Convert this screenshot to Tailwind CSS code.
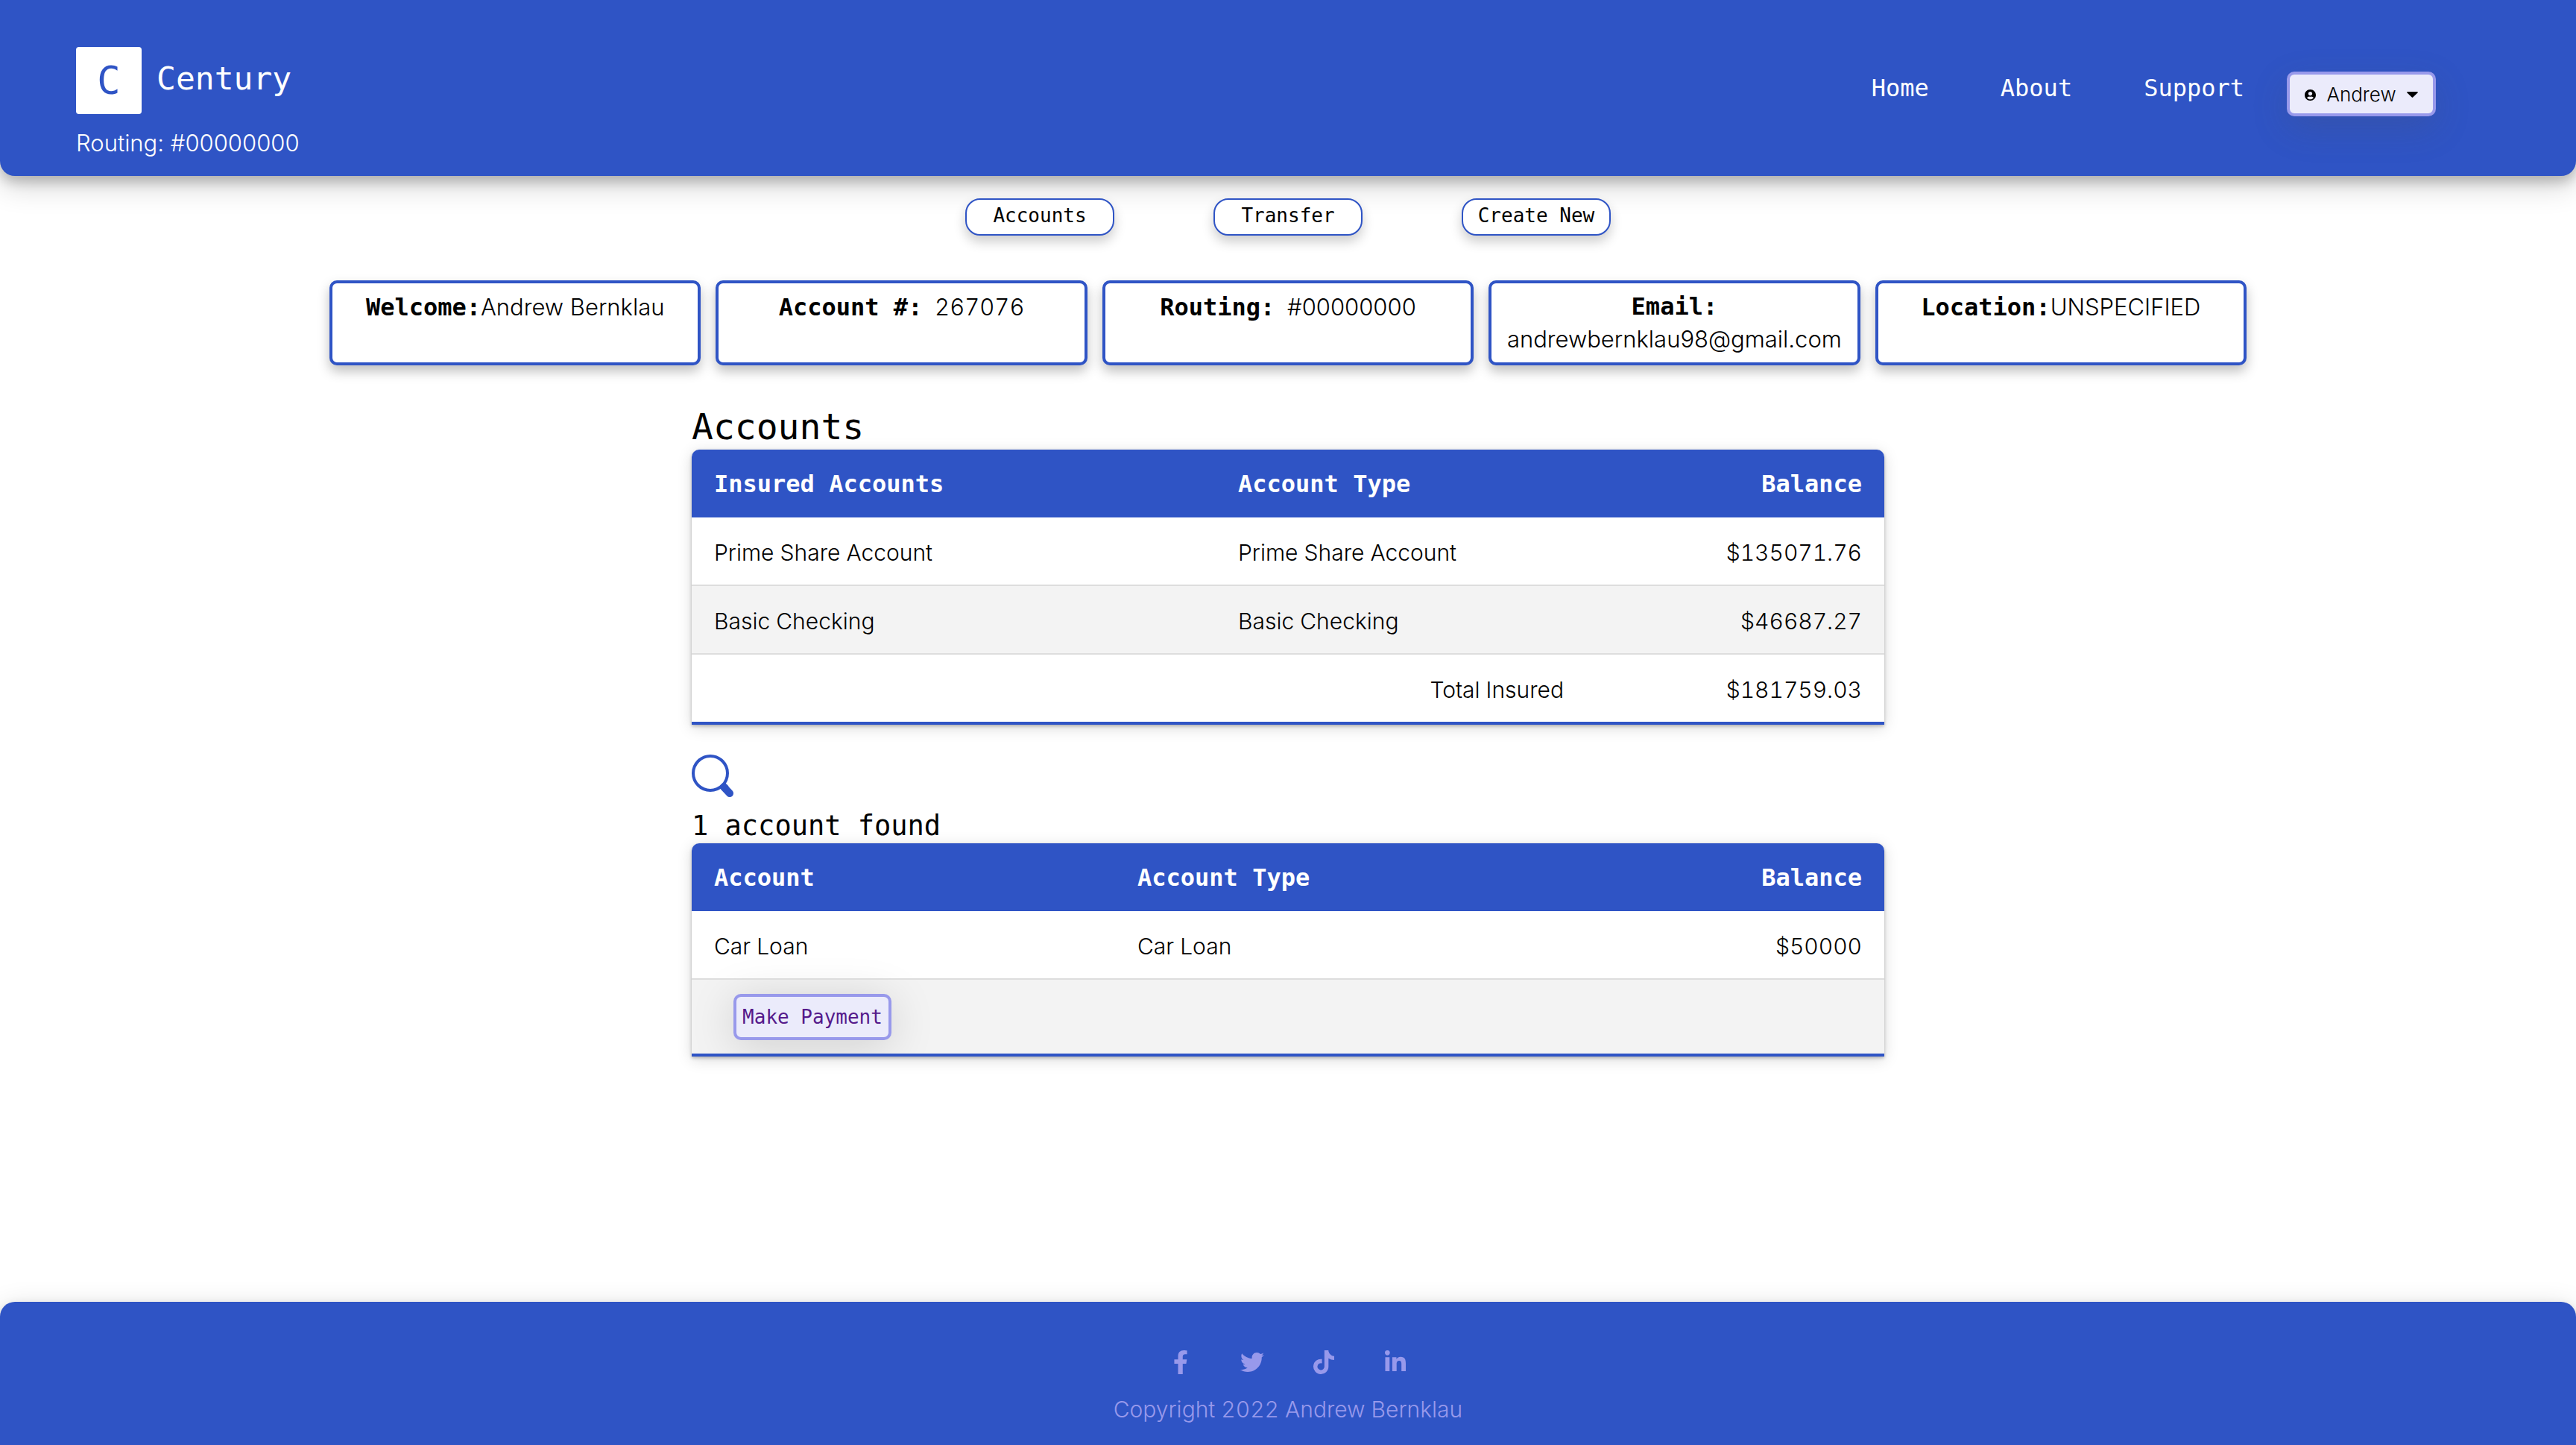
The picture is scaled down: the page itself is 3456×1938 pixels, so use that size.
<!DOCTYPE html>
<html lang="en">
<head>
<meta charset="utf-8">
<meta name="viewport" content="width=device-width, initial-scale=1">
<title>Century</title>
<script src="https://cdn.jsdelivr.net/npm/@tailwindcss/browser@4"></script>
</head>
<body class="flex min-h-screen flex-col bg-white font-['Inter',sans-serif] text-[31px] leading-[42px] font-light text-black">

<header class="flex items-start justify-between rounded-b-[20px] bg-[#2f54c5] pt-[63px] pr-[188px] pb-3 pl-[102px] text-white shadow-[0_8px_16px_rgba(0,0,0,0.2),0_12px_40px_rgba(0,0,0,0.19)]">
  <div>
    <a href="#" class="flex gap-5 font-['DejaVu_Sans_Mono',monospace] font-normal">
      <span class="flex h-[90px] w-[88px] items-center justify-center rounded-sm bg-white text-[52px] text-[#2f54c5]">C</span>
      <span class="pt-[21px] text-[43px]">Century</span>
    </a>
    <p class="mt-[18px] h-[53px]">Routing: #00000000</p>
  </div>
  <div class="flex items-start">
    <nav class="flex gap-24 pt-[34px] pr-[57px] font-['DejaVu_Sans_Mono',monospace] text-[32px] font-normal">
      <a href="#">Home</a>
      <a href="#">About</a>
      <a href="#">Support</a>
    </nav>
    <button type="button" aria-haspopup="menu" class="mt-[33px] flex h-15 w-[200px] items-center justify-between rounded-[10px] border-4 border-[#9899eb] bg-[#ebebfb] px-5 pt-0.5 text-[26px] text-black shadow-[0_16px_48px_rgba(80,80,80,0.2)]">
      <svg class="size-[15px]" viewBox="0 0 496 496" fill="currentColor" aria-hidden="true"><path d="M248 0C111 0 0 111 0 248s111 248 248 248 248-111 248-248S385 0 248 0zm0 96c49 0 88 39 88 88s-39 88-88 88-88-39-88-88 39-88 88-88zm0 344c-59 0-111-27-146-69 19-35 56-59 98-59 3 0 5 0 7 1 13 4 27 7 41 7s28-3 41-7c2-1 4-1 7-1 42 0 79 24 98 59-35 42-87 69-146 69z"/></svg>
      <span>Andrew</span>
      <svg class="h-2 w-[15px]" viewBox="0 0 15 8" fill="currentColor" aria-hidden="true"><path d="M1 0h13c1 0 1 1 .5 1.500L8.200 7.500c-.4.400-1 .4-1.400 0L.5 1.500C0 1 0 0 1 0z"/></svg>
    </button>
  </div>
</header>

<main class="flex flex-1 flex-col items-center">
  <div class="flex gap-[133px] pt-[30px] font-['DejaVu_Sans_Mono',monospace] text-[26px] font-normal">
    <button type="button" class="h-[50px] w-[200px] rounded-[20px] border-2 border-[#2f54c5] bg-white pb-1 leading-[42px] shadow-[0_8px_16px_rgba(0,0,0,0.2)]">Accounts</button>
    <button type="button" class="h-[50px] w-[200px] rounded-[20px] border-2 border-[#2f54c5] bg-white pb-1 leading-[42px] shadow-[0_8px_16px_rgba(0,0,0,0.2)]">Transfer</button>
    <button type="button" class="h-[50px] w-[200px] rounded-[20px] border-2 border-[#2f54c5] bg-white pb-1 leading-[42px] shadow-[0_8px_16px_rgba(0,0,0,0.2)]">Create New</button>
  </div>

  <dl class="grid w-3/4 grid-cols-5 gap-5 px-2.5 pt-15 text-center leading-[43px]">
    <div class="h-[114px] rounded-[10px] border-4 border-[#2f54c5] bg-white pt-2.5 shadow-[0_8px_16px_rgba(0,0,0,0.25)]">
      <dt class="inline font-['DejaVu_Sans_Mono',monospace] text-[32px] font-bold">Welcome:</dt><dd class="inline">Andrew Bernklau</dd>
    </div>
    <div class="h-[114px] rounded-[10px] border-4 border-[#2f54c5] bg-white pt-2.5 shadow-[0_8px_16px_rgba(0,0,0,0.25)]">
      <dt class="mr-2 inline font-['DejaVu_Sans_Mono',monospace] text-[32px] font-bold">Account #:</dt>
      <dd class="inline tabular-nums">267076</dd>
    </div>
    <div class="h-[114px] rounded-[10px] border-4 border-[#2f54c5] bg-white pt-2.5 shadow-[0_8px_16px_rgba(0,0,0,0.25)]">
      <dt class="mr-2 inline font-['DejaVu_Sans_Mono',monospace] text-[32px] font-bold">Routing:</dt>
      <dd class="inline">#00000000</dd>
    </div>
    <div class="h-[114px] rounded-[10px] border-4 border-[#2f54c5] bg-white pt-2.5 shadow-[0_8px_16px_rgba(0,0,0,0.25)]">
      <dt class="font-['DejaVu_Sans_Mono',monospace] text-[32px] font-bold">Email:</dt>
      <dd>andrewbernklau98@gmail.com</dd>
    </div>
    <div class="h-[114px] rounded-[10px] border-4 border-[#2f54c5] bg-white pt-2.5 shadow-[0_8px_16px_rgba(0,0,0,0.25)]">
      <dt class="inline font-['DejaVu_Sans_Mono',monospace] text-[32px] font-bold">Location:</dt><dd class="inline">UNSPECIFIED</dd>
    </div>
  </dl>

  <div class="w-[1600px] max-w-full pt-[51px] text-[30px] tabular-nums">
    <h1 class="font-['DejaVu_Sans_Mono',monospace] text-[48px] leading-[62px] font-normal">Accounts</h1>
    <div class="overflow-hidden rounded-t-[10px] border-b-4 border-[#2f54c5] shadow-[0_2px_4px_rgba(0,0,0,0.25),0_4px_20px_rgba(0,0,0,0.15)]">
      <table class="w-full table-fixed">
        <colgroup><col class="w-[703px]"><col class="w-[497px]"><col></colgroup>
        <thead class="bg-[#2f54c5] text-left font-['DejaVu_Sans_Mono',monospace] text-[32px] text-white">
          <tr class="h-[91px]">
            <th class="px-[30px] font-bold">Insured Accounts</th>
            <th class="px-[30px] font-bold">Account Type</th>
            <th class="px-[30px] text-right font-bold">Balance</th>
          </tr>
        </thead>
        <tbody>
          <tr class="border-b-2 border-[#dddddd]">
            <td class="px-[30px] pt-[26px] pb-[22px]">Prime Share Account</td>
            <td class="px-[30px] pt-[26px] pb-[22px]">Prime Share Account</td>
            <td class="px-[30px] pt-[26px] pb-[22px] text-right">$135071.76</td>
          </tr>
          <tr class="border-b-2 border-[#dddddd] bg-[#f3f3f3]">
            <td class="px-[30px] pt-[26px] pb-[22px]">Basic Checking</td>
            <td class="px-[30px] pt-[26px] pb-[22px]">Basic Checking</td>
            <td class="px-[30px] pt-[26px] pb-[22px] text-right">$46687.27</td>
          </tr>
          <tr>
            <td class="px-[30px] pt-[26px] pb-[22px]"></td>
            <td class="px-[30px] pt-[26px] pb-[22px] text-right">Total Insured</td>
            <td class="px-[30px] pt-[26px] pb-[22px] text-right">$181759.03</td>
          </tr>
        </tbody>
      </table>
    </div>

    <button type="button" aria-label="Search accounts" class="mt-10 block size-[57px] text-[#2f54c5]">
      <svg class="size-full" viewBox="0 0 57 57" fill="none" stroke="currentColor" aria-hidden="true"><circle cx="25" cy="25" r="23" stroke-width="4"/><path d="M43 43.500l8 8.500" stroke-width="10" stroke-linecap="round"/><path d="M42 42l4 4" stroke-width="10"/></svg>
    </button>
    <h2 class="mt-[15px] font-['DejaVu_Sans_Mono',monospace] text-[37px] leading-[47px] font-normal">1 account found</h2>
    <div class="overflow-hidden rounded-t-[10px] border-b-4 border-[#2f54c5] shadow-[0_2px_4px_rgba(0,0,0,0.25),0_4px_20px_rgba(0,0,0,0.15)]">
      <table class="w-full table-fixed">
        <colgroup><col class="w-[568px]"><col class="w-[632px]"><col></colgroup>
        <thead class="bg-[#2f54c5] text-left font-['DejaVu_Sans_Mono',monospace] text-[32px] text-white">
          <tr class="h-[91px]">
            <th class="px-[30px] font-bold">Account</th>
            <th class="px-[30px] font-bold">Account Type</th>
            <th class="px-[30px] text-right font-bold">Balance</th>
          </tr>
        </thead>
        <tbody>
          <tr class="border-b-2 border-[#dddddd]">
            <td class="px-[30px] pt-[26px] pb-[22px]">Car Loan</td>
            <td class="px-[30px] pt-[26px] pb-[22px]">Car Loan</td>
            <td class="px-[30px] pt-[26px] pb-[22px] text-right">$50000</td>
          </tr>
          <tr class="h-[100px] bg-[#f3f3f3]">
            <td class="pl-14" colspan="3">
              <a href="#" class="flex h-[62px] w-[212px] justify-center rounded-[10px] border-4 border-[#9899eb] bg-[#ebebfb] pt-1.5 font-['DejaVu_Sans_Mono',monospace] text-[26px] font-normal text-[#551a8b] shadow-[0_8px_60px_rgba(0,0,0,0.15)]">Make Payment</a>
            </td>
          </tr>
        </tbody>
      </table>
    </div>
  </div>
</main>

<footer class="flex h-48 flex-col items-center rounded-t-[20px] bg-[#2f54c5] pt-[65px] text-[30px] text-[#9899eb] shadow-[0_8px_16px_rgba(0,0,0,0.2),0_12px_40px_rgba(0,0,0,0.19)]">
  <div class="flex gap-16">
    <a href="#" aria-label="Facebook"><svg class="size-8" viewBox="-96 0 512 512" fill="currentColor"><path d="M279.140 288l14.220-92.660h-88.910v-60.130c0-25.350 12.420-50.060 52.240-50.060h40.420V6.260S260.430 0 225.360 0c-73.220 0-121.080 44.380-121.080 124.720v70.620H22.890V288h81.390v224h100.170V288z"/></svg></a>
    <a href="#" aria-label="Twitter"><svg class="size-8" viewBox="0 0 512 512" fill="currentColor"><path d="M459.370 151.716c.325 4.548.325 9.097.325 13.645 0 138.720-105.583 298.558-298.558 298.558-59.452 0-114.680-17.219-161.137-47.106 8.447.974 16.568 1.299 25.340 1.299 49.055 0 94.213-16.568 130.274-44.832-46.132-.975-84.792-31.188-98.112-72.772 6.498.974 12.995 1.624 19.818 1.624 9.421 0 18.843-1.300 27.614-3.573-48.081-9.747-84.143-51.980-84.143-102.985v-1.299c13.969 7.797 30.214 12.670 47.431 13.319-28.264-18.843-46.781-51.005-46.781-87.391 0-19.492 5.197-37.360 14.294-52.954 51.655 63.675 129.300 105.258 216.365 109.807-1.624-7.797-2.599-15.918-2.599-24.040 0-57.828 46.782-104.934 104.934-104.934 30.213 0 57.502 12.670 76.670 33.137 23.715-4.548 46.456-13.320 66.599-25.340-7.798 24.366-24.366 44.833-46.132 57.827 21.117-2.273 41.584-8.122 60.426-16.243-14.292 20.791-32.161 39.308-52.628 54.253z"/></svg></a>
    <a href="#" aria-label="TikTok"><svg class="size-8" viewBox="-32 0 512 512" fill="currentColor"><path d="M448 209.910a210.060 210.060 0 0 1-122.770-39.250v178.720A162.550 162.550 0 1 1 185 188.310v89.890a74.620 74.620 0 1 0 52.230 71.180V0h88a121.180 121.180 0 0 0 1.860 22.170 122.180 122.180 0 0 0 53.910 80.220 121.430 121.430 0 0 0 67 20.140z"/></svg></a>
    <a href="#" aria-label="LinkedIn"><svg class="size-8" viewBox="-32 0 512 512" fill="currentColor"><path d="M100.280 448H7.400V148.900h92.880zM53.790 108.100C24.090 108.100 0 83.500 0 53.800a53.790 53.790 0 0 1 107.580 0c0 29.700-24.100 54.300-53.790 54.300zM447.900 448h-92.680V302.400c0-34.700-.7-79.200-48.290-79.200-48.290 0-55.690 37.700-55.690 76.700V448h-92.780V148.900h89.080v40.800h1.300c12.400-23.500 42.690-48.300 87.880-48.300 94 0 111.280 61.900 111.280 142.300V448z"/></svg></a>
  </div>
  <p class="mt-[26px] tabular-nums">Copyright 2022 Andrew Bernklau</p>
</footer>
</body>
</html>
